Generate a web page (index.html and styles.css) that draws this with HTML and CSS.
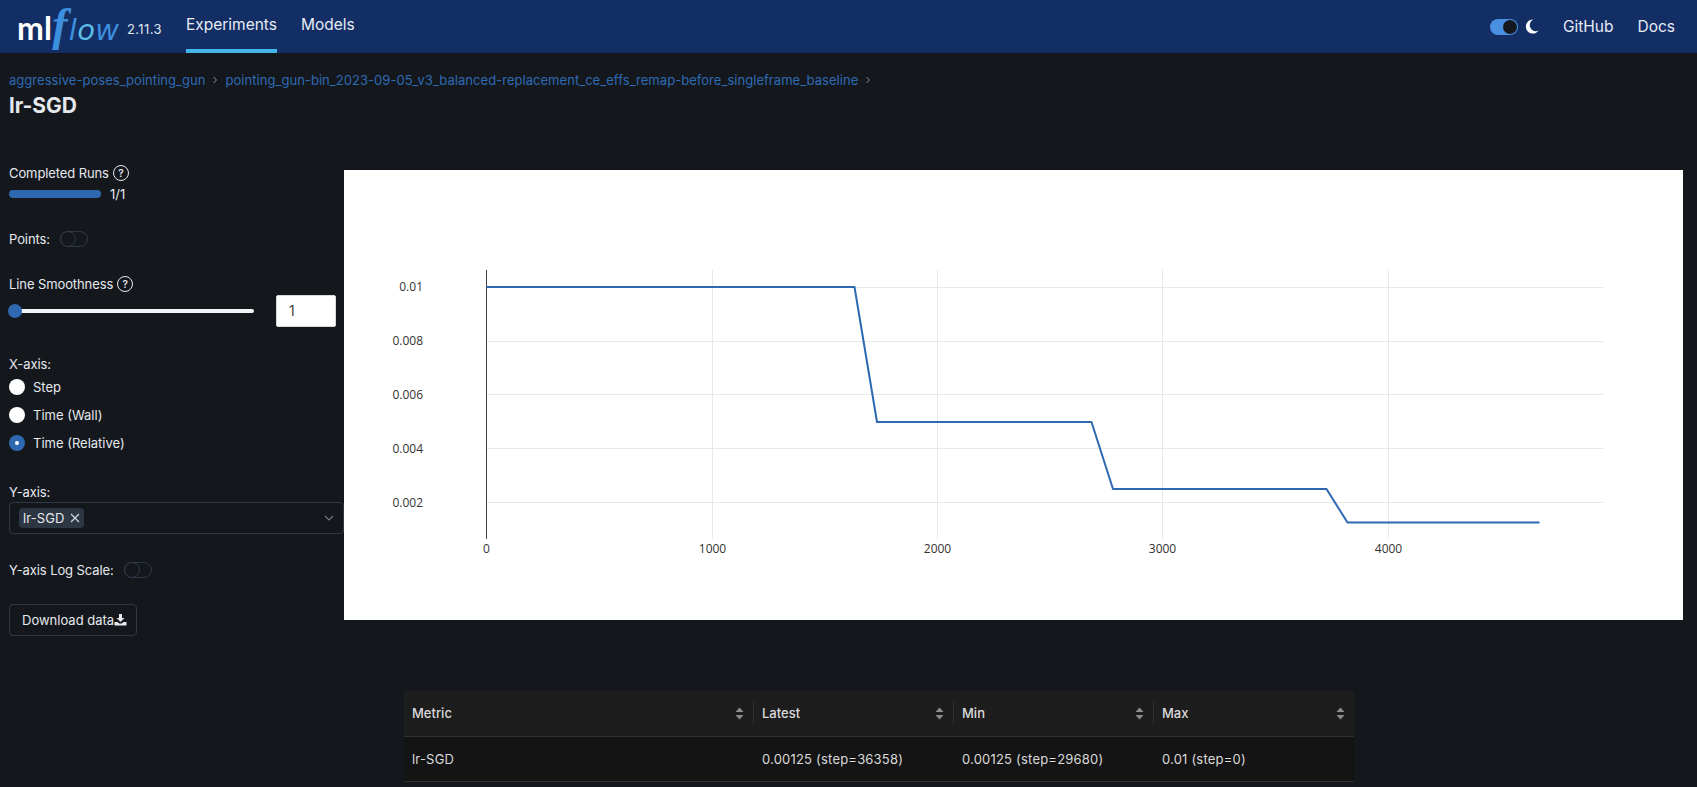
FILE: index.html
```html
<!DOCTYPE html>
<html lang="en">
<head>
    <meta charset="UTF-8">
    <meta name="viewport" content="width=device-width, initial-scale=1.0">
    <title>lr-SGD - MLflow</title>
    <link rel="stylesheet" href="styles.css">
</head>
<body>

    <header class="topbar">
        <div class="logo">
            <span class="logo-ml">ml</span><span class="logo-f">f</span><span class="logo-flow">l<span class="logo-o">o</span>w</span>
        </div>
        <span class="version">2.11.3</span>
        <nav class="nav">
            <a class="nav-link active" href="#">Experiments</a>
            <a class="nav-link" href="#">Models</a>
        </nav>
        <div class="topbar-right">
            <span class="theme-switch"><span class="theme-knob"></span></span>
            <svg class="moon" width="14" height="15" viewBox="0 0 14 15"><path d="M8.2 0.6A7 7 0 1 0 13.6 11.6A6 6 0 0 1 8.2 0.6Z" fill="#fff"/></svg>
            <a class="top-link" href="#">GitHub</a>
            <a class="top-link" href="#">Docs</a>
        </div>
    </header>

    <main class="page">
        <div class="breadcrumbs">
            <a href="#">aggressive-poses_pointing_gun</a>
            <svg width="6" height="8" viewBox="0 0 6 8"><path d="M1.5 1L4.5 4L1.5 7" fill="none" stroke="#8a929c" stroke-width="1"/></svg>
            <a href="#">pointing_gun-bin_2023-09-05_v3_balanced-replacement_ce_effs_remap-before_singleframe_baseline</a>
            <svg width="6" height="8" viewBox="0 0 6 8"><path d="M1.5 1L4.5 4L1.5 7" fill="none" stroke="#8a929c" stroke-width="1"/></svg>
        </div>
        <h1 class="title">lr-SGD</h1>

        <div class="content">
            <aside class="controls">
                <div class="group">
                    <div class="label-row">Completed Runs <span class="help">?</span></div>
                    <div class="progress-row">
                        <span class="progress"></span>
                        <span>1/1</span>
                    </div>
                </div>

                <div class="group label-row">
                    Points: <span class="switch"><span class="switch-knob"></span></span>
                </div>

                <div class="group group-smooth">
                    <div class="label-row">Line Smoothness <span class="help">?</span></div>
                    <div class="slider-row">
                        <div class="slider"><span class="slider-handle"></span></div>
                        <input class="smooth-input" type="text" value="1">
                    </div>
                </div>

                <div class="group group-x">
                    <div class="label-row">X-axis:</div>
                    <div class="radio-list">
                        <div class="radio-row"><span class="radio"></span>Step</div>
                        <div class="radio-row"><span class="radio"></span>Time (Wall)</div>
                        <div class="radio-row"><span class="radio checked"></span>Time (Relative)</div>
                    </div>
                </div>

                <div class="group group-y">
                    <div class="label-row">Y-axis:</div>
                    <div class="select">
                        <span class="tag">lr-SGD
                            <svg width="10" height="10" viewBox="0 0 10 10"><path d="M1 1L9 9M9 1L1 9" stroke="#d5dae0" stroke-width="1.1" fill="none"/></svg>
                        </span>
                        <svg class="chevron" width="10" height="6" viewBox="0 0 10 6"><path d="M1 1L5 5L9 1" stroke="#6f7884" stroke-width="1.2" fill="none"/></svg>
                    </div>
                </div>

                <div class="group group-log label-row">
                    Y-axis Log Scale: <span class="switch"><span class="switch-knob"></span></span>
                </div>

                <button class="download">Download data<svg width="13" height="12" viewBox="0 0 13 12"><path d="M5 0H8V4H10.5L6.5 8L2.5 4H5Z" fill="#e5e9ee"/><path d="M0.5 8H3.5L5.2 9.6H7.8L9.5 8H12.5V11.5H0.5Z" fill="#e5e9ee"/></svg></button>
            </aside>

            <section class="chart">
                <svg width="1339" height="450" viewBox="0 0 1339 450">
                    <g class="grid">
                        <path d="M368.500 100V369M593.500 100V369M818.500 100V369M1044.500 100V369"/>
                        <path d="M142 117.500H1259M142 171.500H1259M142 224.500H1259M142 278.500H1259M142 332.500H1259"/>
                    </g>
                    <path class="zero" d="M142.500 100V369"/>
                    <polyline class="line" points="142.500,117 510.500,117 533,252 747.500,252 769,319 982.500,319 1003.500,352.500 1195.500,352.500"/>
                    <g class="ticks">
                        <text x="142.500" y="383" text-anchor="middle">0</text>
                        <text x="368.500" y="383" text-anchor="middle">1000</text>
                        <text x="593.500" y="383" text-anchor="middle">2000</text>
                        <text x="818.500" y="383" text-anchor="middle">3000</text>
                        <text x="1044.500" y="383" text-anchor="middle">4000</text>
                        <text x="79" y="121" text-anchor="end">0.01</text>
                        <text x="79" y="175" text-anchor="end">0.008</text>
                        <text x="79" y="228.500" text-anchor="end">0.006</text>
                        <text x="79" y="282.500" text-anchor="end">0.004</text>
                        <text x="79" y="336.500" text-anchor="end">0.002</text>
                    </g>
                </svg>
            </section>
        </div>

        <table class="metrics">
            <thead>
                <tr>
                    <th class="col-metric"><div class="th-cell">Metric<svg class="sort" width="9" height="13" viewBox="0 0 9 13"><path d="M4.5 0.500L8.500 5H0.500Z"/><path d="M4.500 12.500L0.500 8H8.500Z"/></svg></div></th>
                    <th><div class="th-cell">Latest<svg class="sort" width="9" height="13" viewBox="0 0 9 13"><path d="M4.5 0.500L8.500 5H0.500Z"/><path d="M4.500 12.500L0.500 8H8.500Z"/></svg></div></th>
                    <th><div class="th-cell">Min<svg class="sort" width="9" height="13" viewBox="0 0 9 13"><path d="M4.5 0.500L8.500 5H0.500Z"/><path d="M4.500 12.500L0.500 8H8.500Z"/></svg></div></th>
                    <th><div class="th-cell last">Max<svg class="sort" width="9" height="13" viewBox="0 0 9 13"><path d="M4.5 0.500L8.500 5H0.500Z"/><path d="M4.500 12.500L0.500 8H8.500Z"/></svg></div></th>
                </tr>
            </thead>
            <tbody>
                <tr>
                    <td>lr-SGD</td>
                    <td>0.00125 (step=36358)</td>
                    <td>0.00125 (step=29680)</td>
                    <td>0.01 (step=0)</td>
                </tr>
            </tbody>
        </table>
    </main>

</body>
</html>
```

FILE: styles.css
```css
* {
    box-sizing: border-box;
}
html, body {
    height: 787px;
    overflow: hidden;
}
body {
    margin: 0;
    background-color: #14181d;
    color: #e5e9ee;
    font-family: Inter, "Noto Sans", sans-serif;
    font-size: 13px;
}
a {
    text-decoration: none;
    color: inherit;
}

/* top bar */
.topbar {
    height: 53px;
    display: flex;
    align-items: center;
    background-color: #132e65;
    padding-left: 17px;
}
.logo {
    width: 104px;
    height: 53px;
    display: flex;
    align-items: baseline;
    line-height: 50px;
}
.logo-ml {
    font-family: Lato, sans-serif;
    font-size: 32px;
    font-weight: 700;
    letter-spacing: 0.3px;
    color: #fff;
}
.logo-f {
    font-family: "Liberation Serif", serif;
    font-style: italic;
    font-weight: 700;
    font-size: 46px;
    color: #3d8fdf;
}
.logo-flow {
    font-family: "DejaVu Sans", sans-serif;
    font-style: italic;
    font-size: 29px;
    letter-spacing: 0.4px;
    color: #3d8fdf;
    margin-left: 1px;
}
.logo-o {
    color: #5cbde6;
}
.version {
    margin-left: 6px;
    margin-top: 5px;
    font-size: 13px;
    letter-spacing: 0.4px;
    color: #dfe5ee;
}
.nav {
    display: flex;
    gap: 24px;
    margin-left: 24px;
    height: 53px;
}
.nav-link {
    font-size: 15.5px;
    line-height: 50px;
    color: #e6ebf5;
    border-bottom: 4px solid transparent;
}
.nav-link.active {
    border-bottom-color: #43b7ea;
}
.topbar-right {
    margin-left: auto;
    display: flex;
    align-items: center;
    padding-right: 22px;
}
.theme-switch {
    width: 28px;
    height: 16px;
    border-radius: 8px;
    background-color: #4a90e2;
    display: flex;
    justify-content: flex-end;
    align-items: center;
    padding-right: 1px;
}
.theme-knob {
    width: 14px;
    height: 14px;
    border-radius: 50%;
    background-color: #14181d;
}
.moon {
    margin-left: 7px;
}
.top-link {
    margin-left: 24px;
    font-size: 15.5px;
    color: #e6ebf5;
}

/* page */
.page {
    padding-left: 9px;
}
.breadcrumbs {
    display: flex;
    align-items: center;
    gap: 7px;
    height: 20px;
    margin-top: 17px;
    font-size: 13px;
    letter-spacing: 0.04px;
    color: #2f6ab5;
}
.title {
    margin: 3px 0 0;
    font-size: 21px;
    line-height: 26px;
    font-weight: 700;
    color: #e5e9ee;
}
.content {
    display: flex;
    align-items: flex-start;
    margin-top: 44px;
}

/* left controls */
.controls {
    width: 335px;
    flex: none;
}
.group {
    margin-bottom: 25px;
}
.group-smooth {
    margin-bottom: 27px;
}
.group-y {
    margin-bottom: 26px;
}
.group-log {
    margin-bottom: 24px;
}
.label-row {
    display: flex;
    align-items: center;
    gap: 4px;
    height: 20px;
    letter-spacing: -0.1px;
}
.help {
    width: 16px;
    height: 16px;
    border: 1.5px solid #e5e9ee;
    border-radius: 50%;
    font-size: 10px;
    font-weight: 600;
    display: flex;
    align-items: center;
    justify-content: center;
}
.progress-row {
    display: flex;
    align-items: center;
    gap: 9px;
    height: 21px;
}
.progress {
    width: 92px;
    height: 8px;
    border-radius: 4px;
    background-color: #2e68b0;
}
.switch {
    width: 28px;
    height: 16px;
    margin-left: 6px;
    border: 1px solid #2f3946;
    border-radius: 8px;
}
.switch-knob {
    display: block;
    width: 16px;
    height: 16px;
    margin: -1px;
    border: 1px solid #2f3946;
    border-radius: 50%;
}
.slider-row {
    display: flex;
    align-items: center;
    height: 33px;
}
.slider {
    position: relative;
    width: 245px;
    height: 4px;
    border-radius: 2px;
    background-color: #f2f4f6;
}
.slider-handle {
    position: absolute;
    left: -1px;
    top: -5px;
    width: 14px;
    height: 14px;
    border-radius: 50%;
    background-color: #2e68b0;
}
.smooth-input {
    width: 60px;
    height: 32px;
    margin-left: 22px;
    padding: 0 0 0 12px;
    border: 1px solid #d9d9d9;
    border-radius: 2px;
    background-color: #fff;
    color: #444;
    font: 14px Inter, sans-serif;
}
.radio-list {
    margin-top: -1px;
}
.radio-row {
    display: flex;
    align-items: center;
    gap: 8px;
    height: 28px;
}
.radio {
    width: 16px;
    height: 16px;
    border-radius: 50%;
    background-color: #fff;
}
.radio.checked {
    background-color: #2e68b0;
    display: flex;
    align-items: center;
    justify-content: center;
}
.radio.checked::after {
    content: "";
    width: 4px;
    height: 4px;
    border-radius: 50%;
    background-color: #fff;
}
.select {
    display: flex;
    align-items: center;
    justify-content: space-between;
    width: 335px;
    height: 32px;
    padding: 0 9px;
    border: 1px solid #2f3946;
    border-radius: 4px;
}
.tag {
    display: flex;
    align-items: center;
    gap: 5px;
    height: 20px;
    padding: 0 4px;
    border-radius: 4px;
    letter-spacing: 0.1px;
    background-color: #2d3743;
}
.download {
    display: flex;
    align-items: center;
    width: 128px;
    height: 32px;
    padding: 0 0 0 12px;
    border: 1px solid #2f3946;
    border-radius: 4px;
    background: none;
    color: #e5e9ee;
    font: 13px Inter, sans-serif;
}

/* plot */
.chart {
    width: 1339px;
    height: 450px;
    margin-top: 7px;
    background-color: #fff;
}
.chart svg {
    display: block;
}
.grid path {
    stroke: #e8e8e8;
    stroke-width: 1;
    fill: none;
}
.zero {
    stroke: #444;
    stroke-width: 1;
    fill: none;
}
.line {
    stroke: #2e68b0;
    stroke-width: 2;
    fill: none;
    stroke-linejoin: round;
}
.ticks text {
    font-family: "Open Sans", sans-serif;
    font-size: 12px;
    fill: #333;
}

/* metrics table */
.metrics {
    width: 950px;
    margin-left: 395px;
    margin-top: 55px;
    table-layout: fixed;
    border-collapse: collapse;
    color: rgba(255, 255, 255, 0.85);
}
.metrics th {
    height: 45px;
    padding: 0;
    text-align: left;
    font-weight: 500;
    background-color: #1d1d1d;
    border-bottom: 1px solid #303030;
}
.col-metric {
    width: 350px;
}
.th-cell {
    display: flex;
    align-items: center;
    justify-content: space-between;
    height: 22px;
    padding: 0 9px 0 8px;
    border-right: 1px solid #303030;
}
.th-cell.last {
    border-right: none;
}
.sort {
    fill: #8c8c8c;
}
.metrics td {
    height: 45px;
    padding: 0 8px;
    letter-spacing: 0.2px;
    background-color: #141414;
    border-bottom: 1px solid #303030;
}
```
